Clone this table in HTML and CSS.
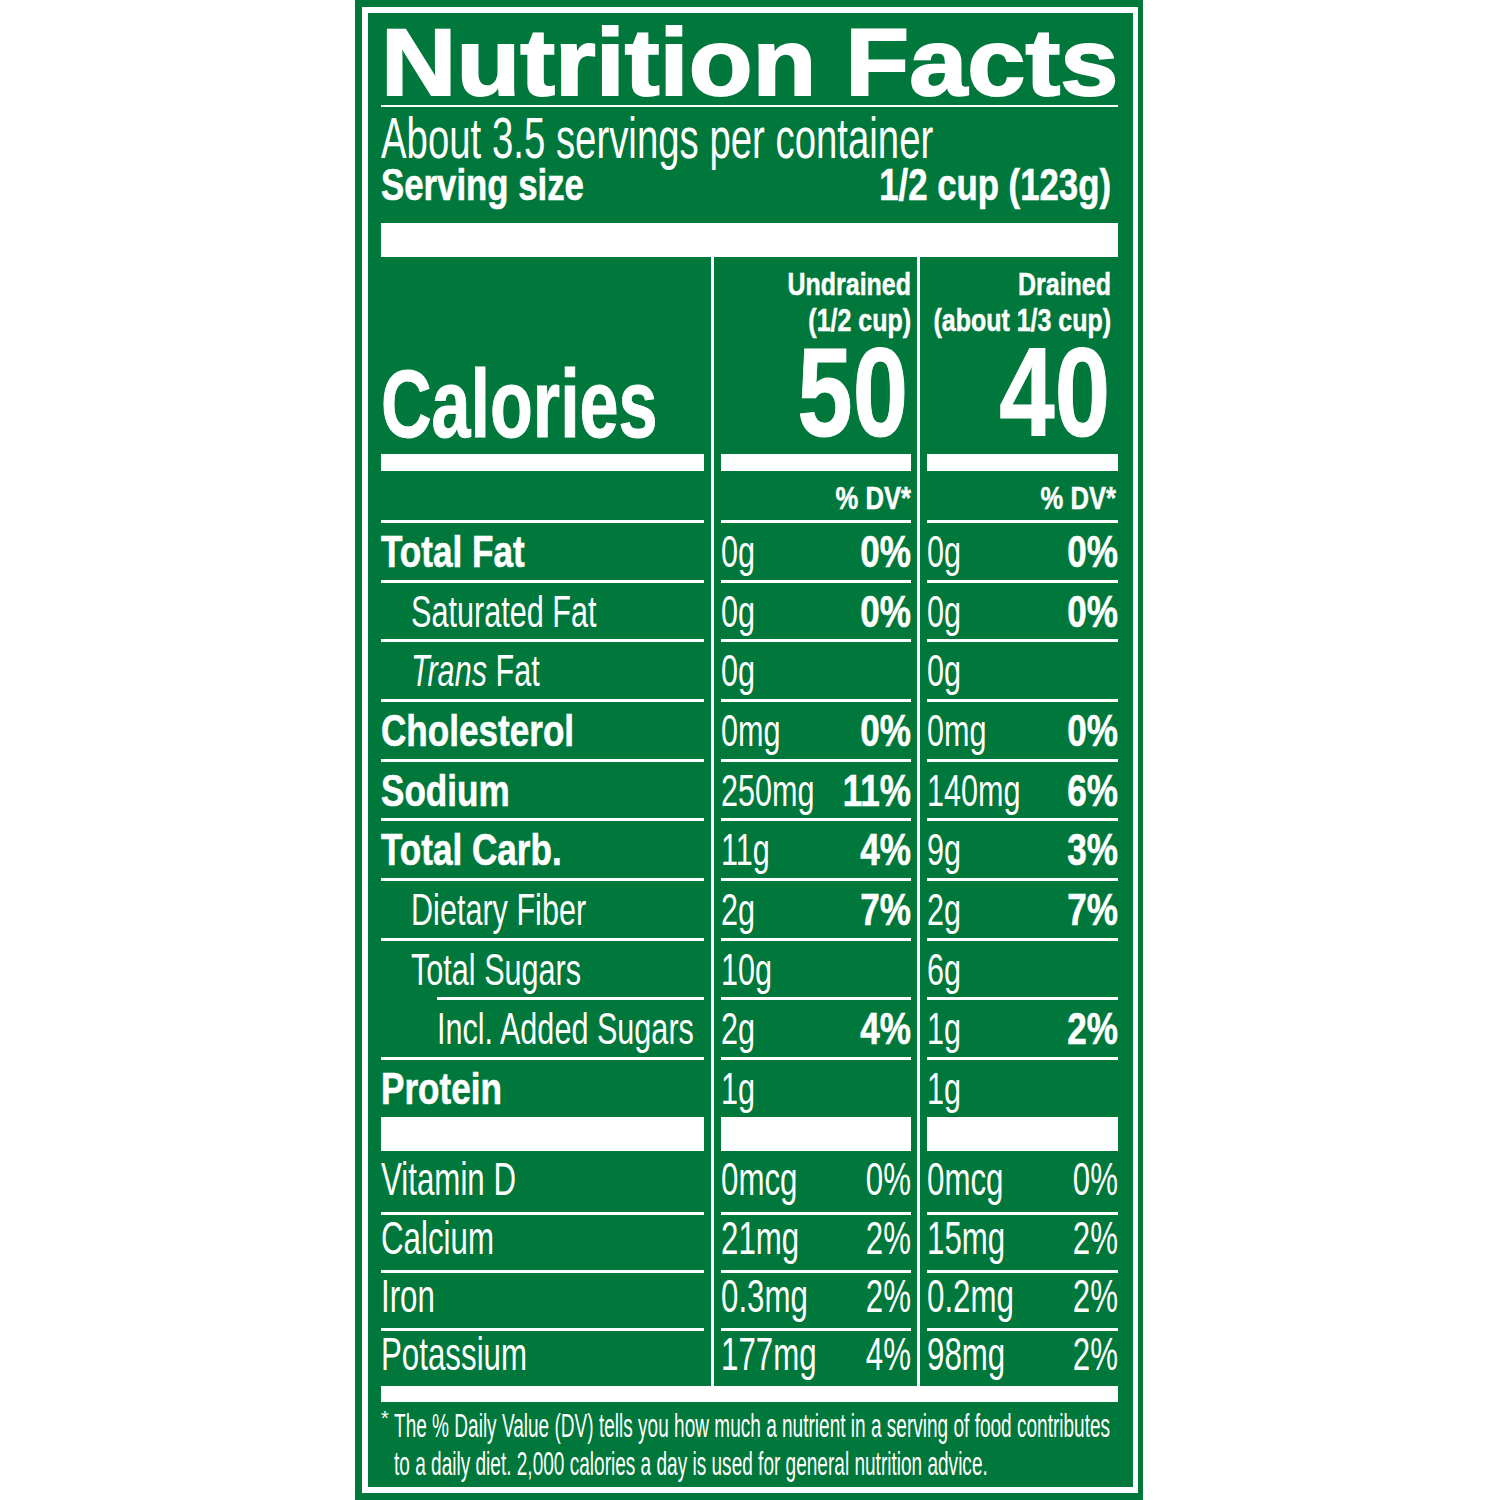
FILE: index.html
```html
<!DOCTYPE html>
<html lang="en">
<head>
<meta charset="utf-8">
<title>Nutrition Facts</title>
<link rel="stylesheet" href="styles.css">
</head>
<body>
<div class="label">
  <div class="inner">
    <h1 class="title"><span class="sq f110">Nutrition Facts</span></h1>
    <div class="servings"><span class="sq f673">About 3.5 servings per container</span></div>
    <div class="ssize ov">
      <span class="sq f79">Serving size</span>
      <span class="sq f79 r">1/2 cup (123g)</span>
    </div>
    <div class="bar-top"></div>

    <div class="table">
      <div class="col names">
        <div class="head"><div class="cal"><span class="sq f73">Calories</span></div></div>
        <div class="bar"></div>
        <div class="dvh"></div>
        <div class="row b"><span class="sq f78">Total Fat</span></div>
        <div class="row ind"><span class="sq f68">Saturated Fat</span></div>
        <div class="row ind"><span class="sq f68"><i>Trans</i> Fat</span></div>
        <div class="row b"><span class="sq f78">Cholesterol</span></div>
        <div class="row b"><span class="sq f78">Sodium</span></div>
        <div class="row b"><span class="sq f78">Total Carb.</span></div>
        <div class="row ind"><span class="sq f68">Dietary Fiber</span></div>
        <div class="row ind"><span class="sq f68">Total Sugars</span></div>
        <div class="row ind2"><span class="sq f68">Incl. Added Sugars</span></div>
        <div class="row b"><span class="sq f78">Protein</span></div>
        <div class="thick"></div>
        <div class="vrow first"><span class="sq f68">Vitamin D</span></div>
        <div class="vrow"><span class="sq f68">Calcium</span></div>
        <div class="vrow"><span class="sq f68">Iron</span></div>
        <div class="vrow"><span class="sq f68">Potassium</span></div>
      </div>

      <div class="col vals v1">
        <div class="head">
          <div class="colhead"><span class="sq f78 r">Undrained<br>(1/2 cup)</span></div>
          <div class="big"><span class="sq f79 r">50</span></div>
        </div>
        <div class="bar"></div>
        <div class="dvh"><span class="sq f80 r">% DV*</span></div>
        <div class="row ov"><span class="sq f68">0g</span><span class="sq f78 r b">0%</span></div>
        <div class="row ov"><span class="sq f68">0g</span><span class="sq f78 r b">0%</span></div>
        <div class="row ov"><span class="sq f68">0g</span></div>
        <div class="row ov"><span class="sq f68">0mg</span><span class="sq f78 r b">0%</span></div>
        <div class="row ov"><span class="sq f68">250mg</span><span class="sq f78 r b">11%</span></div>
        <div class="row ov"><span class="sq f68">11g</span><span class="sq f78 r b">4%</span></div>
        <div class="row ov"><span class="sq f68">2g</span><span class="sq f78 r b">7%</span></div>
        <div class="row ov"><span class="sq f68">10g</span></div>
        <div class="row ov"><span class="sq f68">2g</span><span class="sq f78 r b">4%</span></div>
        <div class="row ov"><span class="sq f68">1g</span></div>
        <div class="thick"></div>
        <div class="vrow first ov"><span class="sq f68">0mcg</span><span class="sq f68 r">0%</span></div>
        <div class="vrow ov"><span class="sq f68">21mg</span><span class="sq f68 r">2%</span></div>
        <div class="vrow ov"><span class="sq f68">0.3mg</span><span class="sq f68 r">2%</span></div>
        <div class="vrow ov"><span class="sq f68">177mg</span><span class="sq f68 r">4%</span></div>
      </div>

      <div class="col vals v2">
        <div class="head">
          <div class="colhead"><span class="sq f78 r">Drained<br>(about 1/3 cup)</span></div>
          <div class="big"><span class="sq f79 r">40</span></div>
        </div>
        <div class="bar"></div>
        <div class="dvh"><span class="sq f80 r">% DV*</span></div>
        <div class="row ov"><span class="sq f68">0g</span><span class="sq f78 r b">0%</span></div>
        <div class="row ov"><span class="sq f68">0g</span><span class="sq f78 r b">0%</span></div>
        <div class="row ov"><span class="sq f68">0g</span></div>
        <div class="row ov"><span class="sq f68">0mg</span><span class="sq f78 r b">0%</span></div>
        <div class="row ov"><span class="sq f68">140mg</span><span class="sq f78 r b">6%</span></div>
        <div class="row ov"><span class="sq f68">9g</span><span class="sq f78 r b">3%</span></div>
        <div class="row ov"><span class="sq f68">2g</span><span class="sq f78 r b">7%</span></div>
        <div class="row ov"><span class="sq f68">6g</span></div>
        <div class="row ov"><span class="sq f68">1g</span><span class="sq f78 r b">2%</span></div>
        <div class="row ov"><span class="sq f68">1g</span></div>
        <div class="thick"></div>
        <div class="vrow first ov"><span class="sq f68">0mcg</span><span class="sq f68 r">0%</span></div>
        <div class="vrow ov"><span class="sq f68">15mg</span><span class="sq f68 r">2%</span></div>
        <div class="vrow ov"><span class="sq f68">0.2mg</span><span class="sq f68 r">2%</span></div>
        <div class="vrow ov"><span class="sq f68">98mg</span><span class="sq f68 r">2%</span></div>
      </div>
    </div>

    <div class="bar-bottom"></div>
    <div class="foot">
      <span class="star">*</span>
      <div class="fn"><span class="sq f56">The % Daily Value (DV) tells you how much a nutrient in a serving of food contributes<br>to a daily diet. 2,000 calories a day is used for general nutrition advice.</span></div>
    </div>
  </div>
</div>
</body>
</html>
```

FILE: styles.css
```css
* { box-sizing: border-box; }
html, body { margin: 0; padding: 0; background: #ffffff; }
body {
  font-family: "Liberation Sans", Arial, sans-serif;
  color: #ffffff;
}

/* label frame */
.label {
  width: 788px;
  margin-left: 355px;
  background: #00773b;
  padding: 7px 5px 7px 7px;
}
.inner {
  border: 6px solid #ffffff;
  border-right-width: 5px;
  padding: 0 15px 5px 13px;
}

/* horizontally squeezed text boxes (condensed type) */
.sq {
  display: block;
  white-space: nowrap;
  transform-origin: 0 50%;
}
.f56 { width: calc(100% / 0.56); transform: scaleX(0.56); }
.f673 { width: calc(100% / 0.673); transform: scaleX(0.673); }
.f68 { width: calc(100% / 0.68); transform: scaleX(0.68); }
.f73 { width: calc(100% / 0.73); transform: scaleX(0.73); }
.f78 { width: calc(100% / 0.78); transform: scaleX(0.78); }
.f79 { width: calc(100% / 0.79); transform: scaleX(0.79); }
.f80 { width: calc(100% / 0.80); transform: scaleX(0.80); }
.f110 { width: calc(100% / 1.1); transform: scaleX(1.1); }
.r { text-align: right; }
.b { font-weight: bold; -webkit-text-stroke: 0.6px #ffffff; }

.ov { display: grid; grid-template-columns: 100%; }
.ov > .sq { grid-area: 1 / 1; }

/* header */
.title {
  margin: 0;
  font-size: 95px;
  font-weight: bold;
  line-height: 86px;
  padding-top: 6px;
  border-bottom: 2px solid #ffffff;
  -webkit-text-stroke: 2px #ffffff;
}
.servings {
  font-size: 57px;
  line-height: 56px;
  padding-top: 3px;
}
.ssize {
  font-size: 44px;
  font-weight: bold;
  line-height: 38px;
  padding-right: 7px;
  -webkit-text-stroke: 0.6px #ffffff;
}
.bar-top {
  height: 34px;
  margin-top: 19px;
  background: #ffffff;
}

/* table */
.table { display: flex; }
.col { display: flex; flex-direction: column; }
.names { width: 323px; }
.vals {
  border-left: 3px solid #ffffff;
  padding-left: 7px;
}
.v1 { width: 200px; margin-left: 7px; }
.v2 { width: 201px; margin-left: 6px; }

.head {
  height: 197px;
  display: flex;
  flex-direction: column;
}
.names .head { justify-content: flex-end; }
.cal {
  font-size: 96px;
  font-weight: bold;
  line-height: 96px;
  padding-bottom: 2px;
  -webkit-text-stroke: 1px #ffffff;
}
.colhead {
  font-size: 32px;
  font-weight: bold;
  line-height: 36px;
  padding-top: 9px;
  -webkit-text-stroke: 0.5px #ffffff;
}
.v2 .colhead { padding-right: 7px; }
.big {
  margin-top: auto;
  font-size: 126px;
  font-weight: bold;
  line-height: 100px;
  padding-bottom: 11px;
  -webkit-text-stroke: 1px #ffffff;
}
.v1 .big { padding-right: 3px; }
.v2 .big { padding-right: 8px; }

.bar { height: 17px; background: #ffffff; }
.dvh {
  height: 49px;
  padding-top: 5px;
  font-size: 32px;
  font-weight: bold;
  line-height: 44px;
  -webkit-text-stroke: 0.5px #ffffff;
}
.v2 .dvh { padding-right: 2px; }

.row {
  height: 59.67px;
  border-top: 3px solid #ffffff;
  padding-top: 2px;
  font-size: 45px;
  line-height: 54.67px;
}
.ind { padding-left: 30px; }
.ind2 { margin-left: 56px; }

.thick { height: 34px; background: #ffffff; }

.vrow {
  height: 58px;
  border-top: 3px solid #ffffff;
  font-size: 46px;
  line-height: 47px;
}
.vrow.first {
  height: 61px;
  border-top: 0;
  line-height: 57px;
}

/* footnote */
.bar-bottom { height: 16px; background: #ffffff; }
.foot {
  display: flex;
  padding-top: 4px;
  font-size: 34px;
  line-height: 38px;
}
.star {
  width: 13px;
  font-size: 20px;
  line-height: 24px;
}
.fn { flex: 1; min-width: 0; }
```
